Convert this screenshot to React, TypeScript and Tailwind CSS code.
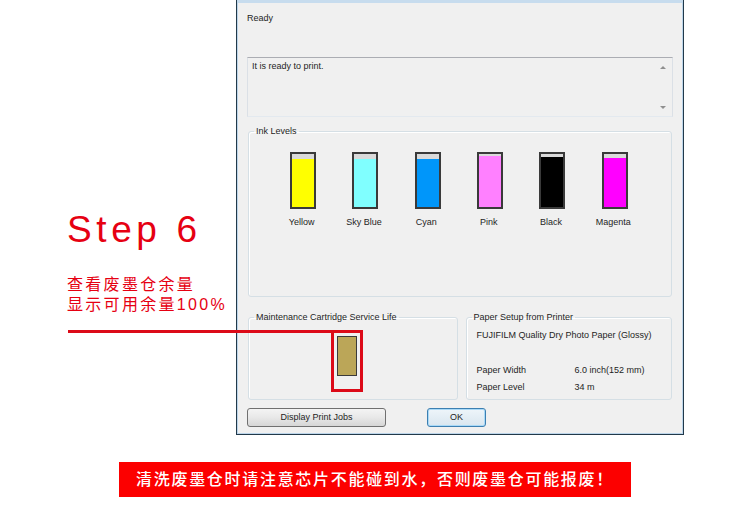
import React from 'react'

type Ink = { name: string; color: string; empty: number }

const inks: Ink[] = [
  { name: 'Yellow', color: '#ffff00', empty: 5 },
  { name: 'Sky Blue', color: '#80ffff', empty: 5 },
  { name: 'Cyan', color: '#0096fa', empty: 5 },
  { name: 'Pink', color: '#ff80ff', empty: 2 },
  { name: 'Black', color: '#000000', empty: 3 },
  { name: 'Magenta', color: '#ff00ff', empty: 4 },
]

const ui = { fontFamily: '"Liberation Sans", Arial, sans-serif' }
const cjk = { fontFamily: '"Liberation Sans", "Noto Sans CJK SC", sans-serif' }

function GroupBox({ title, className, children }: { title: string; className: string; children?: React.ReactNode }) {
  return (
    <fieldset className={`rounded-[3px] border border-[#d5dfe5] shadow-[inset_1px_1px_0_#ffffff] ${className}`}>
      <legend className="ml-[5px] px-[2px] text-[9px] leading-[11px] text-[#1e1e1e]">{title}</legend>
      {children}
    </fieldset>
  )
}

function InkTank({ ink }: { ink: Ink }) {
  return (
    <div className="flex flex-col items-center">
      <div className="flex h-[57px] w-[26px] flex-col border-2 border-[#3a3a3a] bg-[#dadada]">
        {/* unused part at the top, rest is the remaining ink */}
        <div style={{ height: ink.empty }} className="shrink-0" />
        <div className="flex-1" style={{ backgroundColor: ink.color }} />
      </div>
      <div className="mt-[8px] -ml-[3px] whitespace-nowrap text-[9px] leading-[11px] text-[#1e1e1e]">{ink.name}</div>
    </div>
  )
}

function StatusDialog() {
  return (
    <div className="h-[435px] w-[448px] shrink-0 border-x border-b border-[#22394a] bg-[#f0f0f0]" style={ui}>
      <div className="flex h-full flex-col border-x border-b border-t-[3px] border-[#bcd5ea] border-t-[#c7dcee] px-[9px] text-[#1e1e1e]">
        <div className="mt-[10px] text-[9px] leading-[11px]">Ready</div>

        {/* read-only message box */}
        <div className="relative mt-[33px] h-[60px] border border-[#dbe0e6] border-t-[#abadb3] border-b-[#e3e9ef] pl-[4px] pt-[3px]">
          <div className="text-[9px] leading-[11px]">It is ready to print.</div>
          <div className="absolute right-[6px] top-[8px] h-0 w-0 border-x-[3px] border-b-[3px] border-x-transparent border-b-[#8f8f8f]" />
          <div className="absolute bottom-[7px] right-[6px] h-0 w-0 border-x-[3px] border-t-[3px] border-x-transparent border-t-[#8f8f8f]" />
        </div>

        <GroupBox title="Ink Levels" className="mx-[1px] mt-[9px] h-[171px]">
          <div className="grid w-[397px] grid-cols-6 pl-[23px] pt-[15px]">
            {inks.map(ink => (
              <InkTank key={ink.name} ink={ink} />
            ))}
          </div>
        </GroupBox>

        <div className="mx-[1px] mt-[15px] flex gap-[8px]">
          <GroupBox title="Maintenance Cartridge Service Life" className="h-[88px] w-[210px]">
            <div className="pl-[88px] pt-[13px]">
              <div className="h-[40px] w-[20px] border-[1.5px] border-[#3a3a3a] bg-[#bba658]" />
            </div>
          </GroupBox>
          <GroupBox title="Paper Setup from Printer" className="h-[88px] w-[207px]">
            <div className="pl-[10px] pt-[7px] text-[9px] leading-[11px]">
              <div className="whitespace-nowrap">FUJIFILM Quality Dry Photo Paper (Glossy)</div>
              <div className="mt-[24px] flex">
                <span className="w-[98px]">Paper Width</span>
                <span>6.0 inch(152 mm)</span>
              </div>
              <div className="mt-[6px] flex">
                <span className="w-[98px]">Paper Level</span>
                <span>34 m</span>
              </div>
            </div>
          </GroupBox>
        </div>

        <div className="mt-[8px] flex">
          <button className="h-[19px] w-[139px] rounded-[3px] border border-[#707070] bg-gradient-to-b from-[#f4f4f4] via-[#e8e8e8] to-[#d6d6d6] text-[9px] leading-[17px] text-[#1e1e1e]">
            Display Print Jobs
          </button>
          <button className="ml-[41px] h-[19px] w-[59px] rounded-[3px] border border-[#3c7fb1] bg-gradient-to-b from-[#eef5fa] to-[#d9e6ef] text-[9px] leading-[17px] text-[#1e1e1e] shadow-[inset_0_0_0_1px_#a9d9f7]">
            OK
          </button>
        </div>
      </div>
    </div>
  )
}

export default function App() {
  return (
    <div className="relative h-[512px] w-[750px] overflow-hidden bg-white">
      <div className="flex">
        {/* step caption */}
        <div className="w-[236px] shrink-0 pl-[67px] pt-[211px] text-[#e60012]">
          <div className="whitespace-nowrap text-[37px] leading-[37px] tracking-[4.6px]" style={ui}>
            Step 6
          </div>
          <div className="mt-[27px] whitespace-nowrap text-[16px] leading-[20px] tracking-[2.3px]" style={cjk}>
            <div>查看废墨仓余量</div>
            <div>显示可用余量100%</div>
          </div>
        </div>
        <StatusDialog />
      </div>

      <div
        className="ml-[119px] mt-[27px] flex h-[35px] w-[512px] items-center justify-center bg-[#fc0000] text-[16px] font-medium tracking-[1.7px] text-white"
        style={cjk}
      >
        清洗废墨仓时请注意芯片不能碰到水，否则废墨仓可能报废！
      </div>

      {/* pointer line and highlight around the maintenance cartridge */}
      <div className="absolute left-[68px] top-[330px] h-[3px] w-[264px] bg-[#dc0a18]" />
      <div className="absolute left-[331px] top-[330px] h-[62px] w-[32px] border-[3px] border-[#dc0a18]" />
    </div>
  )
}
